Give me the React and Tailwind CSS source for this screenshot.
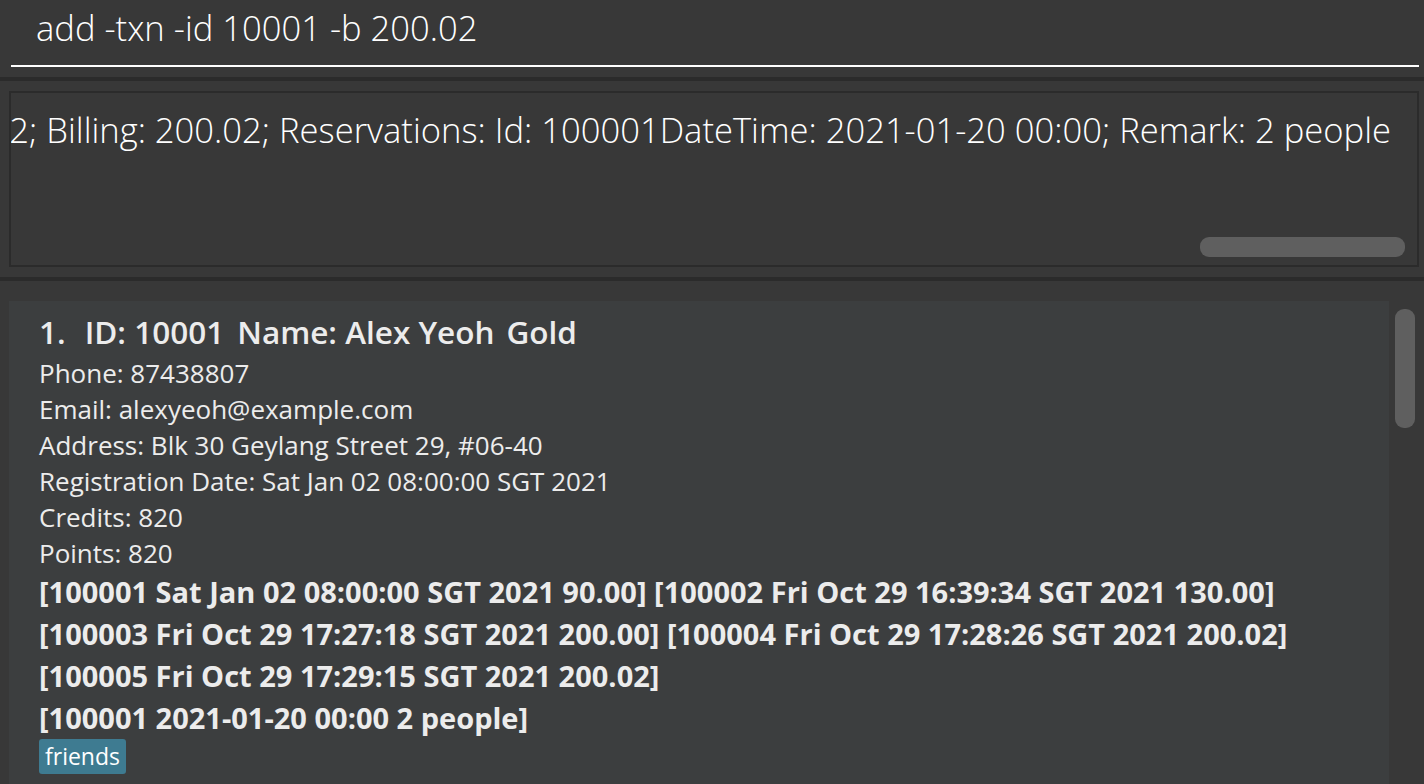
const TXNS = [
  '[100001 Sat Jan 02 08:00:00 SGT 2021 90.00] [100002 Fri Oct 29 16:39:34 SGT 2021 130.00]',
  '[100003 Fri Oct 29 17:27:18 SGT 2021 200.00] [100004 Fri Oct 29 17:28:26 SGT 2021 200.02]',
  '[100005 Fri Oct 29 17:29:15 SGT 2021 200.02]',
  '[100001 2021-01-20 00:00 2 people]',
]

const DETAILS = [
  'Phone: 87438807',
  'Email: alexyeoh@example.com',
  'Address: Blk 30 Geylang Street 29, #06-40',
  'Registration Date: Sat Jan 02 08:00:00 SGT 2021',
  'Credits: 820',
  'Points: 820',
]

const RESULT =
  'New transaction added: Id: 10001; Name: Alex Yeoh; Phone: 87438807; Email: alexyeoh@example.com; ' +
  'Address: Blk 30 Geylang Street 29, #06-40; Credits: 1022; Points: 1022; Billing: 200.02; ' +
  'Reservations: Id: 100001DateTime: 2021-01-20 00:00; Remark: 2 people'

export default function App() {
  return (
    <div className="h-[784px] w-full overflow-hidden bg-[#383838] flex flex-col font-['Open_Sans',sans-serif]">

      {/* Command box */}
      <div className="h-[77px] shrink-0 pl-[11px] pr-[5px]">
        <div className="h-[67px] border-b-2 border-white pt-[5px] pl-[25px]">
          <span className="text-[34.6px] leading-[45px] font-light text-white whitespace-nowrap">
            add -txn -id 10001 -b 200.02
          </span>
        </div>
      </div>
      <div className="h-[4px] shrink-0 bg-[#2b2b2b]" />

      {/* Result display */}
      <div className="shrink-0 py-[10px] pl-[9px] pr-[5px]">
        <div className="h-[176px] border-2 border-[#2b2b2b] flex flex-col overflow-hidden">
          <div className="flex justify-end overflow-hidden pt-[14px] pr-[26px]">
            <span className="text-[34.6px] leading-[45px] font-light text-white whitespace-nowrap">
              {RESULT}
            </span>
          </div>
          <div className="mt-auto mb-[8px] mr-[12px] self-end w-[205px] h-[20px] rounded-[9px] bg-[#5f5f5f]" />
        </div>
      </div>
      <div className="h-[4px] shrink-0 bg-[#2b2b2b]" />

      {/* Person list */}
      <div className="flex-1 min-h-0 flex pl-[9px] pt-[20px]">
        <div className="w-[1380px] shrink-0 bg-[#3c3e3f] pl-[30px] pt-[11px] text-[#ececec]">
          <div className="flex items-baseline text-[31.5px] leading-[40px] font-semibold whitespace-nowrap">
            <span>1.</span>
            <span className="ml-[19px]">ID: 10001</span>
            <span className="ml-[13px]">Name: Alex Yeoh</span>
            <span className="ml-[12px]">Gold</span>
          </div>
          <div className="mt-[3px]">
            {DETAILS.map(d => (
              <p key={d} className="text-[26px] leading-[36px] whitespace-nowrap">{d}</p>
            ))}
          </div>
          <div>
            {TXNS.map((t, i) => (
              <p key={i} className="text-[29px] leading-[42px] font-bold whitespace-nowrap">{t}</p>
            ))}
          </div>
          <div className="flex">
            <span className="px-[6px] py-[2px] rounded-[3px] bg-[#3e7b91] text-white text-[23px] leading-[31px]">
              friends
            </span>
          </div>
        </div>
        <div className="flex-1 pl-[6px] pt-[8px]">
          <div className="w-[20px] h-[119px] rounded-[9px] bg-[#5f5f5f]" />
        </div>
      </div>
    </div>
  )
}
